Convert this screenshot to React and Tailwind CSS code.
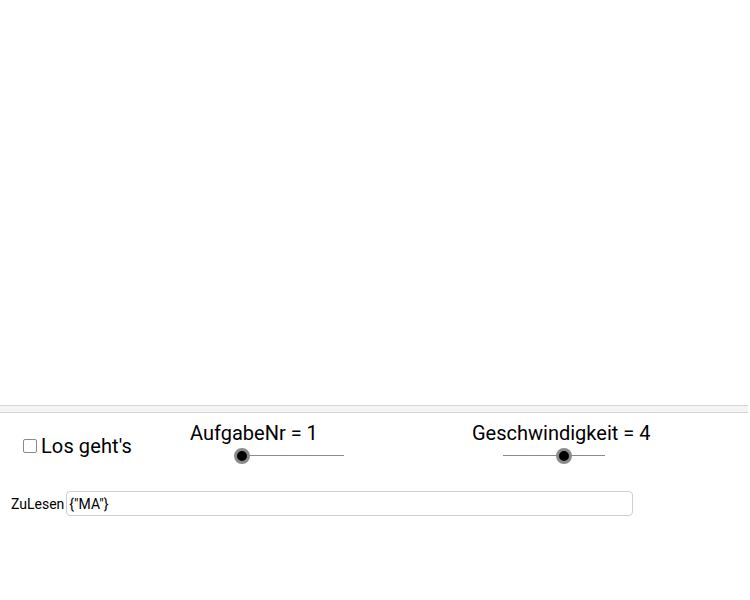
import React from "react";

function Slider({ width, knob, trackLeft }) {
  return (
    <div className="relative h-4" style={{ width }}>
      <div className="absolute right-0 top-[7px] h-px bg-[#8c8c8c]" style={{ left: trackLeft }} />
      <div
        className="absolute top-0 h-4 w-4 rounded-full bg-black border-[3px] border-[#8a8a8a]"
        style={{ left: knob }}
      />
    </div>
  );
}

export default function App() {
  return (
    <div className="w-[750px] h-[600px] bg-white text-black font-['Roboto',sans-serif]">
      <div className="h-[405px]" />
      <div className="w-[748px] h-[8px] border-y border-[#d4d4d4] bg-[#f4f4f4]" />

      <div className="flex h-[67px]">
        <div className="w-[190px] pl-[23px] pt-[21px]">
          <label className="flex items-center gap-[4px] text-[20px] leading-[24px]">
            <span className="w-[14px] h-[14px] border border-[#8a8a8a] rounded-[2px] bg-white" />
            <span className="tracking-[0.1px]">Los geht's</span>
          </label>
        </div>

        <div className="w-[282px] pt-[8px]">
          <div className="text-[20px] leading-[24px]">AufgabeNr = 1</div>
          <div className="ml-[44px] mt-[3px]">
            <Slider width={110} knob={0} trackLeft={8} />
          </div>
        </div>

        <div className="flex-1 pt-[8px]">
          <div className="text-[20px] leading-[24px]">Geschwindigkeit = 4</div>
          <div className="ml-[31px] mt-[3px]">
            <Slider width={102} knob={53} trackLeft={0} />
          </div>
        </div>
      </div>

      <div className="flex items-center mt-[11px] pl-[11px]">
        <span className="text-[14px] leading-[18px] mr-[2px]">ZuLesen</span>
        <div className="w-[567px] h-[25px] rounded-[4px] border border-[#cfcfcf] flex items-center pl-[2px] text-[14px] leading-[18px]">
          {'{"MA"}'}
        </div>
      </div>
    </div>
  );
}
